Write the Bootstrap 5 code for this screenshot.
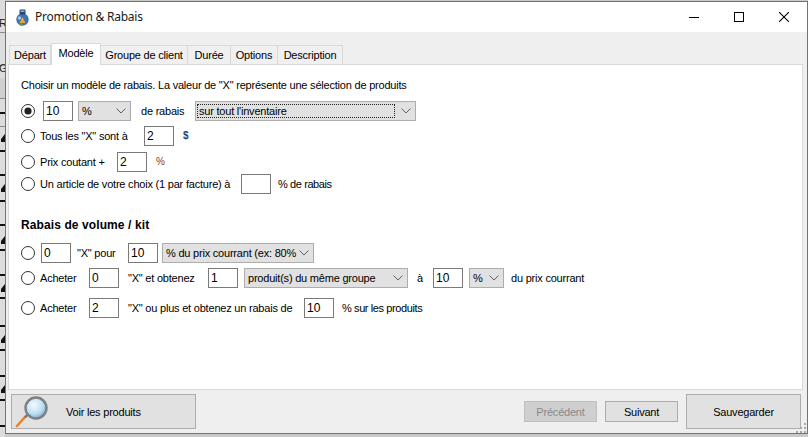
<!DOCTYPE html>
<html lang="fr">
<head>
<meta charset="utf-8">
<title>Promotion &amp; Rabais</title>
<link href="https://cdn.jsdelivr.net/npm/bootstrap@5.3.0/dist/css/bootstrap.min.css" rel="stylesheet">
<style>
html,body{margin:0;background:#cfcfcf;overflow:hidden}
body{font-family:"Liberation Sans",Arial,sans-serif;font-size:11px;letter-spacing:-.21px;color:#000;line-height:16px}
.desk{width:808px;height:437px;overflow:hidden;background:#c9c9c9}
.strip{width:5px;height:437px;flex:none;background:#d8d8d8;overflow:hidden}
.strip svg{display:block}
.wnd{width:803px;height:433px;margin-top:1px;flex:none;border:1px solid #737373;background:#efefef}
.ttl{height:30px;background:#fff;padding-left:9px;flex:none}
.ttl-text{font-family:"Noto Sans","Open Sans",sans-serif;font-size:12px;color:#1a1a1a;margin-left:5px;letter-spacing:-.02em}
.wbtns{margin-left:auto;padding-right:18px;gap:35px}
.wbtns svg{display:block}
.tabbar{height:32px;padding:12px 0 0 3px;flex:none}
.tabbar .nav-tabs{border:0;flex-wrap:nowrap;height:20px;align-items:flex-end}
.tabbar .nav-link{height:19px;padding:1px 0 0;border:1px solid #d9d9d9;border-left:0;border-bottom:0;border-radius:0;background:#f0f0f0;color:#000;font-size:11px;line-height:16px;text-align:center;margin:0;white-space:nowrap}
.tabbar .nav-item:first-child .nav-link{border-left:1px solid #d9d9d9}
.tabbar .nav-link.active{height:22px;margin-bottom:-1px;background:#fff;border:1px solid #d9d9d9;border-bottom:0;color:#000;position:relative;z-index:2;padding-top:1px}
.t1{width:42px}.t2{width:50px}.t3{width:87px}.t4{width:43px}.t5{width:47px}.t6{width:65px}
.pane{margin:0 4px 0 2px;height:326px;background:#fff;border:1px solid #d9d9d9;padding:12px 0 0 12px;flex:none}
.fr{height:20px;white-space:nowrap}
.fr>*{flex:none}
.intro{height:16px;white-space:nowrap}
.m8{margin-top:8px}.m5{margin-top:5px}.m6{margin-top:6px}.m2{margin-top:2px}.m23{margin-top:23px}.m10{margin-top:10px}
.hd{height:16px;font-weight:700;font-size:12px;letter-spacing:.1px}
.form-check-input.rd{width:14px;height:14px;margin:0;border:1px solid #333;background-color:#fff;float:none;flex:none;box-shadow:none}
.form-check-input.rd:checked{background-color:#fff;border-color:#333;background-image:url("data:image/svg+xml,%3csvg xmlns='http://www.w3.org/2000/svg' viewBox='-4 -4 8 8'%3e%3ccircle r='2.4' fill='%23222'/%3e%3c/svg%3e")}
.up3{margin-top:-6px}
.form-control.num{width:30px;height:20px;min-height:0;padding:0 2px;border:1px solid #7a7a7a;border-radius:0;font-size:12px;line-height:17px;letter-spacing:0;color:#000;box-shadow:none;background:#fff}
.form-select.cb{height:20px;padding:0 14px 0 3px;border:1px solid #adadad;border-radius:0;font-size:11px;letter-spacing:-.21px;line-height:17px;color:#000;background-color:#e1e1e1;box-shadow:none;background-image:url("data:image/svg+xml,%3csvg xmlns='http://www.w3.org/2000/svg' viewBox='0 0 10 6'%3e%3cpath d='M.5.5 5 5 9.500.5' fill='none' stroke='%23606060'/%3e%3c/svg%3e");background-size:10px 6px;background-position:right 4px center}
.cbwrap{width:221px;height:20px}
.cb.c53{width:53px}.cb.c221{width:221px}.cb.c152{width:152px}.cb.c164{width:164px}.cb.c35{width:35px}
.focusbox{position:absolute;left:2px;top:3px;width:198px;height:14px;border:1px dotted #222;pointer-events:none}
.g5{margin-left:5px}.g4{margin-left:4px}.g6{margin-left:6px}.g7{margin-left:7px}.g8{margin-left:8px}.g9{margin-left:9px}.g10{margin-left:10px}.g11{margin-left:11px}.g12{margin-left:12px}.g13{margin-left:13px}
.w5{width:5px}.w37{width:37px}.w41{width:41px}.w42{width:42px}.w65{width:65px}.w69{width:69px}.w91{width:91px}.w167{width:167px}.w192{width:192px}
.tight{letter-spacing:-.4px}
.dollar{color:#1f3f78;font-weight:700;font-size:10px}
.pct{color:#8a3b1c;font-size:10px}
.foot{height:43px;padding:0 6px 0 5px;flex:none}
.btn.wb{border:1px solid #adadad;border-radius:0;background:#e1e1e1;color:#000;font-size:11px;letter-spacing:-.21px;line-height:16px;padding:0;height:35px;box-shadow:none}
.btn.voir{width:185px;padding-left:3px;text-align:left}
.voir span{margin-left:17px}
.btn.small1{width:73px;height:21px}
.btn.sauv{width:115px}
.btn.wb:disabled{background:#cfcfcf;border-color:#bfbfbf;color:#8a8a8a;opacity:1}
.grip{position:absolute;right:0;bottom:0;display:block}
</style>
</head>
<body>
<div class="desk d-flex">
  <div class="strip">
    <svg width="5" height="437" viewBox="0 0 5 437" font-family="Liberation Sans" font-size="11">
      <rect width="5" height="437" fill="#dcdcdc"/>
      <rect y="32" width="5" height="1" fill="#8c8c8c"/><rect y="65" width="5" height="1" fill="#8c8c8c"/>
      <rect y="78" width="5" height="20" fill="#cfcfcf"/><rect y="98" width="5" height="1" fill="#8c8c8c"/>
      <text x="-1" y="27" fill="#222">R</text><text x="-1" y="72" fill="#222">G</text>
      <g fill="#111">
        <rect y="112" width="5" height="2"/><rect y="126" width="5" height="1" fill="#8c8c8c"/><path d="M1 139 5 134V142H1Z"/><rect y="150" width="5" height="2"/>
        <rect y="174" width="5" height="2"/><path d="M1 189 5 184V192H1Z"/><rect y="200" width="5" height="2"/>
        <rect y="224" width="5" height="2"/><path d="M1 241 5 236V244H1Z"/><rect y="249" width="5" height="2"/>
        <rect y="274" width="5" height="2"/><path d="M1 289 5 284V292H1Z"/><rect y="297" width="5" height="2"/>
        <rect y="325" width="5" height="2"/><path d="M1 340 5 335V343H1Z"/><rect y="349" width="5" height="2"/>
        <rect y="375" width="5" height="2"/><path d="M1 390 5 385V393H1Z"/><rect y="399" width="5" height="2"/>
        <rect y="425" width="5" height="2"/>
      </g>
    </svg>
  </div>
  <div class="wnd d-flex flex-column position-relative">
    <div class="ttl d-flex align-items-center">
      <svg width="15" height="17" viewBox="0 0 15 17" aria-hidden="true">
        <circle cx="7.500" cy="10.500" r="6.200" fill="#3f73b8"/>
        <rect x="4.500" y="0.500" width="6" height="5" rx="1" fill="#23476f"/>
        <rect x="5.500" y="1.500" width="4" height="1.500" fill="#8ab4da"/>
        <path d="M7.500 8 10.500 14H4.500Z" fill="#e8a92c"/>
        <path d="M4.500 14H7.500V16.500H5Z" fill="#4f9c49"/>
        <circle cx="4.500" cy="9" r="1.700" fill="#a9c9ea"/>
      </svg>
      <span class="ttl-text">Promotion &amp; Rabais</span>
      <div class="wbtns d-flex align-items-center">
        <svg width="10" height="10" viewBox="0 0 10 10"><path d="M0 5.500H10" stroke="#000"/></svg>
        <svg width="10" height="10" viewBox="0 0 10 10"><rect x=".5" y=".5" width="9" height="9" fill="none" stroke="#000"/></svg>
        <svg width="10" height="10" viewBox="0 0 10 10"><path d="M0 0 10 10M10 0 0 10" stroke="#000" stroke-width="1.100"/></svg>
      </div>
    </div>
    <div class="tabbar">
      <ul class="nav nav-tabs">
        <li class="nav-item"><a class="nav-link t1" href="#">Départ</a></li>
        <li class="nav-item"><a class="nav-link active t2" href="#">Modèle</a></li>
        <li class="nav-item"><a class="nav-link t3" href="#">Groupe de client</a></li>
        <li class="nav-item"><a class="nav-link t4" href="#">Durée</a></li>
        <li class="nav-item"><a class="nav-link t5" href="#">Options</a></li>
        <li class="nav-item"><a class="nav-link t6" href="#">Description</a></li>
      </ul>
    </div>
    <div class="pane">
      <div class="intro">Choisir un modèle de rabais. La valeur de "X" représente une sélection de produits</div>

      <div class="fr d-flex align-items-center m8">
        <input class="form-check-input rd" type="radio" name="m" checked>
        <input class="form-control num g8" value="10">
        <select class="form-select cb c53 g5"><option>%</option></select>
        <span class="g10 w42">de rabais</span>
        <div class="cbwrap position-relative g12">
          <select class="form-select cb c221"><option>sur tout l'inventaire</option></select>
          <span class="focusbox"></span>
        </div>
      </div>
      <div class="fr d-flex align-items-center m5">
        <input class="form-check-input rd" type="radio" name="m">
        <span class="g5 w91">Tous les "X" sont à</span>
        <input class="form-control num g13" value="2">
        <span class="g9 dollar">$</span>
      </div>
      <div class="fr d-flex align-items-center m6">
        <input class="form-check-input rd" type="radio" name="m">
        <span class="g5 w65">Prix coutant +</span>
        <input class="form-control num g12" value="2">
        <span class="g9 pct">%</span>
      </div>
      <div class="fr d-flex align-items-center m2">
        <input class="form-check-input rd" type="radio" name="m">
        <span class="g5 w192">Un article de votre choix (1 par facture) à</span>
        <input class="form-control num g9" value="">
        <span class="g7 tight">% de rabais</span>
      </div>

      <div class="hd m23">Rabais de volume / kit</div>

      <div class="fr d-flex align-items-center m10">
        <input class="form-check-input rd up3" type="radio" name="m">
        <input class="form-control num g6" value="0">
        <span class="g6 w41">"X" pour</span>
        <input class="form-control num g10" value="10">
        <select class="form-select cb c152 g4"><option>% du prix courrant (ex: 80%</option></select>
      </div>
      <div class="fr d-flex align-items-center m5">
        <input class="form-check-input rd" type="radio" name="m">
        <span class="g5 w37">Acheter</span>
        <input class="form-control num g12" value="0">
        <span class="g9 w69">"X" et obtenez</span>
        <input class="form-control num g11" value="1">
        <select class="form-select cb c164 g6"><option>produit(s) du même groupe</option></select>
        <span class="g9 w5">à</span>
        <input class="form-control num g11" value="10">
        <select class="form-select cb c35 g6"><option>%</option></select>
        <span class="g7">du prix courrant</span>
      </div>
      <div class="fr d-flex align-items-center m10">
        <input class="form-check-input rd" type="radio" name="m">
        <span class="g5 w37">Acheter</span>
        <input class="form-control num g12" value="2">
        <span class="g9 w167">"X" ou plus et obtenez un rabais de</span>
        <input class="form-control num g9" value="10">
        <span class="g8 tight">% sur les produits</span>
      </div>
    </div>
    <div class="foot d-flex align-items-center">
      <button type="button" class="btn wb voir d-flex align-items-center">
        <svg width="34" height="33" viewBox="0 0 34 33" aria-hidden="true">
          <defs><radialGradient id="gl" cx=".4" cy=".35" r=".7"><stop offset="0" stop-color="#f2fbff"/><stop offset=".6" stop-color="#bfe0f3"/><stop offset="1" stop-color="#6fa9cf"/></radialGradient></defs>
          <path d="M2 31 10 22" stroke="#e8832a" stroke-width="2.600" stroke-linecap="round"/>
          <path d="M10 22.500 13.500 18.500" stroke="#777" stroke-width="2.400"/>
          <circle cx="21" cy="13" r="10.500" fill="url(#gl)" stroke="#7c7f84" stroke-width="2.400"/>
        </svg>
        <span>Voir les produits</span>
      </button>
      <div class="ms-auto d-flex align-items-center">
        <button type="button" class="btn wb small1" disabled>Précédent</button>
        <button type="button" class="btn wb small1 g8">Suivant</button>
        <button type="button" class="btn wb sauv g8">Sauvegarder</button>
      </div>
    </div>
    <svg class="grip" width="11" height="11" viewBox="0 0 11 11" fill="#a8a8a8" aria-hidden="true">
      <rect x="8" y="1" width="2" height="2"/><rect x="4" y="5" width="2" height="2"/><rect x="8" y="5" width="2" height="2"/><rect x="0" y="9" width="2" height="2"/><rect x="4" y="9" width="2" height="2"/><rect x="8" y="9" width="2" height="2"/>
    </svg>
  </div>
</div>
<script src="https://cdn.jsdelivr.net/npm/bootstrap@5.3.0/dist/js/bootstrap.bundle.min.js"></script>
</body>
</html>
